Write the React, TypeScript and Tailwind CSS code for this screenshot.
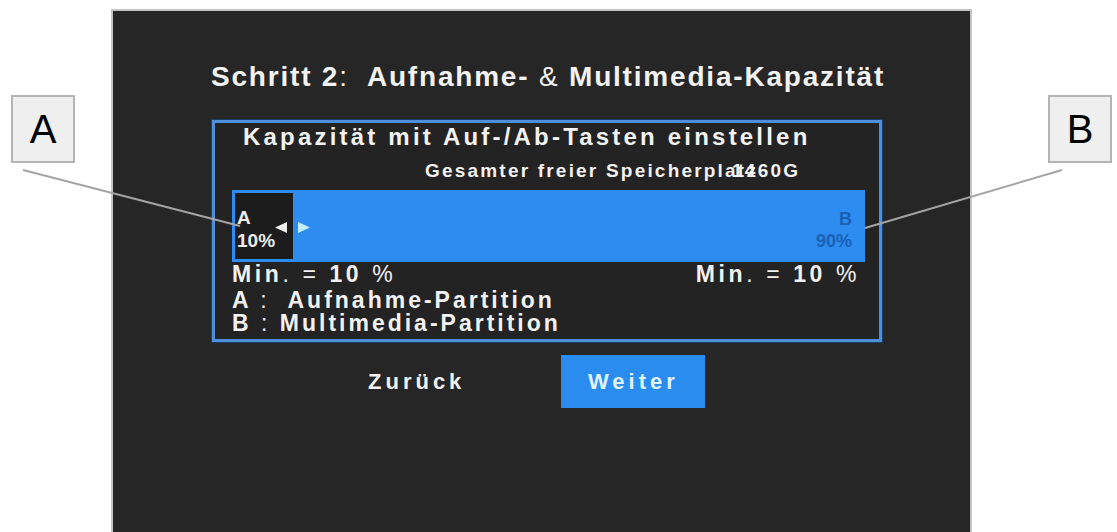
import React from 'react';

const Callout = ({ label }: { label: string }) => (
  <div className="w-[64px] h-[68px] bg-[#efefef] border-2 border-[#b4b4b4] flex items-center justify-center text-[40px] leading-none font-normal text-black font-['Liberation_Sans',Arial,sans-serif]">
    {label}
  </div>
);

const Arrow = ({ dir, color }: { dir: 'left' | 'right'; color: string }) => (
  <svg width="12" height="11" viewBox="0 0 12 11" className="shrink-0">
    {dir === 'left' ? (
      <polygon points="12,0 12,11 0,5.5" fill={color} />
    ) : (
      <polygon points="0,0 0,11 12,5.5" fill={color} />
    )}
  </svg>
);

const App = () => {
  return (
    <div className="relative w-[1117px] h-[532px] bg-white overflow-hidden font-['Liberation_Sans',Arial,sans-serif] font-bold">
      {/* TV screen */}
      <div className="absolute left-[111px] top-[9px] w-[861px] h-[523px] bg-[#262626] border-x-2 border-t-2 border-[#c4c4c4] flex flex-col items-start text-[#f2f2f2]">
        <h1 className="ml-[98px] mt-[50px] text-[28px] leading-[32px] tracking-[1.8px] whitespace-nowrap">
          Schritt 2<span className="font-normal">:</span>&nbsp; Aufnahme- <span className="font-normal">&amp;</span> Multimedia-Kapazität
        </h1>

        {/* panel */}
        <div className="ml-[99px] mt-[27px] w-[670px] h-[222px] border-[3px] border-[#4d8fdc] shadow-[0_0_0_1px_#1c3d66] bg-[#232323] flex flex-col items-start">
          <div className="ml-[28px] mt-[1px] text-[24px] leading-[26px] tracking-[3.2px] whitespace-nowrap">
            Kapazität mit Auf-/Ab-Tasten einstellen
          </div>
          <div className="ml-[210px] mt-[11px] text-[19px] leading-[20px] tracking-[2.2px] whitespace-nowrap flex">
            <span>Gesamter freier Speicherplatz</span>
            <span className="-ml-[26px]">1460G</span>
          </div>

          {/* capacity bar */}
          <div className="ml-[17px] mt-[9px] w-[633px] h-[72px] bg-[#2d8cf0] p-[3px] flex">
            <div className="w-[58px] h-full bg-[#1c1c1c] flex items-start">
              <div className="w-[40px] pl-[2px] pt-[13px] text-[19px] leading-[23px] text-[#ececec]">
                <div>A</div>
                <div>10%</div>
              </div>
              <div className="mt-[29px]">
                <Arrow dir="left" color="#ececec" />
              </div>
            </div>
            <div className="ml-[5px] mt-[29px]">
              <Arrow dir="right" color="#c6ecff" />
            </div>
            <div className="flex-1" />
            <div className="pr-[10px] pt-[15px] text-right text-[18px] leading-[22px] text-[#1a60b6]">
              <div>B</div>
              <div>90%</div>
            </div>
          </div>

          <div className="ml-[17px] w-[633px] pr-[5px] flex justify-between text-[23px] leading-[24px] tracking-[3.6px] whitespace-nowrap">
            <span>
              Min<span className="font-normal">.</span> <span className="font-normal">=</span> 10 <span className="font-normal">%</span>
            </span>
            <span>
              Min<span className="font-normal">.</span> <span className="font-normal">=</span> 10 <span className="font-normal">%</span>
            </span>
          </div>
          <div className="ml-[17px] mt-[3px] text-[23px] leading-[23px] tracking-[3px] whitespace-nowrap">
            <div>
              A <span className="font-normal">:</span>&nbsp; Aufnahme-Partition
            </div>
            <div>
              B <span className="font-normal">:</span> Multimedia-Partition
            </div>
          </div>
        </div>

        {/* buttons */}
        <div className="ml-[255px] mt-[13px] flex items-center">
          <span className="text-[22px] leading-[26px] tracking-[4px]">Zurück</span>
          <div className="ml-[96px] w-[144px] h-[53px] bg-[#2b8cf0] flex items-center justify-center text-[22px] tracking-[4px] text-[#dff3ff]">
            Weiter
          </div>
        </div>
      </div>

      {/* callouts */}
      <div className="absolute left-[11px] top-[95px]">
        <Callout label="A" />
      </div>
      <div className="absolute left-[1048px] top-[95px]">
        <Callout label="B" />
      </div>
      <svg className="absolute inset-0 pointer-events-none" width="1117" height="532">
        <line x1="23" y1="170" x2="240" y2="226" stroke="#a4a4a4" strokeWidth="2" />
        <line x1="1062" y1="170" x2="865" y2="228" stroke="#a4a4a4" strokeWidth="2" />
      </svg>
    </div>
  );
};

export default App;
